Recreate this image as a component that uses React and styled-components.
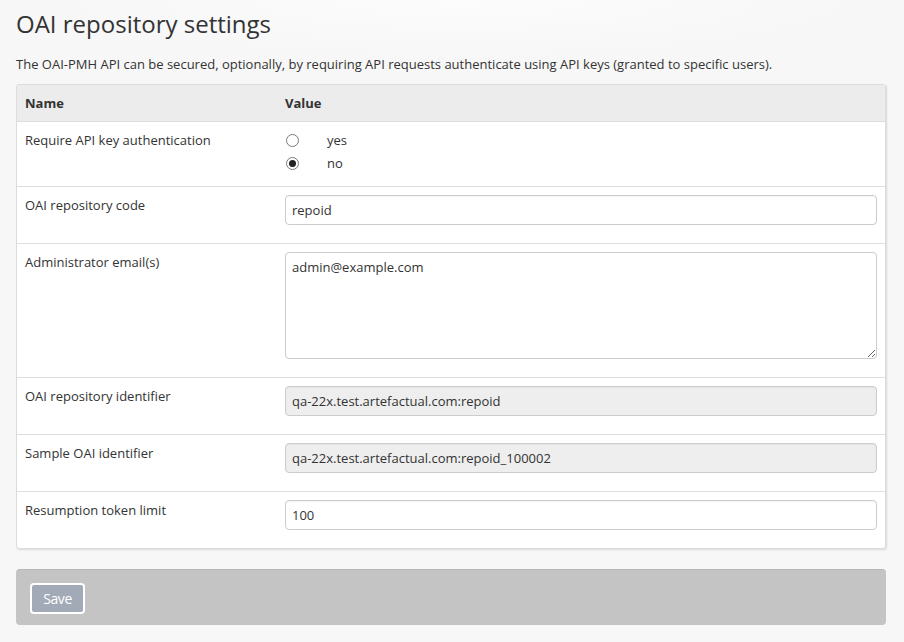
import React from "react";
import styled, { createGlobalStyle } from "styled-components";

const Global = createGlobalStyle`
  html, body { margin: 0; padding: 0; }
  body {
    background: #f7f7f7 radial-gradient(ellipse 420px 60px at 460px 0px, #fcfcfc, #f7f7f7);
    font-family: "Open Sans", "Liberation Sans", sans-serif;
    font-size: 13px;
    color: #333;
    min-height: 642px;
  }
`;

const Page = styled.div`
  width: 870px;
  padding: 9px 0 0 16px;
`;

const Title = styled.h1`
  margin: 0;
  font-size: 24px;
  font-weight: 400;
  line-height: 29px;
  color: #333;
`;

const Intro = styled.p`
  margin: 16px 0 10px;
  line-height: 20px;
`;

const Panel = styled.div`
  background: #fff;
  border: 1px solid #dcdcdc;
  border-radius: 3px;
  box-shadow: 1px 1px 2px rgba(0, 0, 0, 0.12);
  overflow: hidden;
`;

const Table = styled.table`
  width: 100%;
  border-collapse: collapse;
`;

const Th = styled.th`
  background: #ececec;
  text-align: left;
  font-weight: 700;
  line-height: 20px;
  padding: 8px;
  width: ${(p) => p.$w || "auto"};
  border-bottom: 1px solid #dedede;
`;

const Tr = styled.tr`
  & + & td { border-top: 1px solid #dedede; }
`;

const Td = styled.td`
  vertical-align: top;
  padding: 8px;
  line-height: 20px;
`;

const LabelCell = styled(Td)`
  padding-top: 8px;
`;

const RadioGroup = styled.div`
  display: flex;
  flex-direction: column;
  gap: 3px;
  margin-bottom: 5px;
`;

const RadioLine = styled.label`
  display: flex;
  align-items: center;
  height: 20px;
  gap: 28px;
  padding-left: 1px;
`;

const Radio = styled.input.attrs({ type: "radio" })`
  appearance: none;
  margin: 0;
  width: 13px;
  height: 13px;
  border: 1px solid #7a7a7a;
  border-radius: 50%;
  background: #fff;
  box-sizing: border-box;
  display: grid;
  place-items: center;
  &:checked::after {
    content: "";
    width: 7px;
    height: 7px;
    border-radius: 50%;
    background: #222;
  }
`;

const Field = styled.input`
  display: block;
  box-sizing: border-box;
  width: 100%;
  height: 30px;
  margin: 0 0 10px;
  padding: 4px 6px;
  font: inherit;
  font-size: 13px;
  color: #333;
  border: 1px solid #ccc;
  border-radius: 4px;
  background: ${(p) => (p.readOnly ? "#eeeeee" : "#fff")};
  box-shadow: inset 0 1px 1px rgba(0, 0, 0, 0.04);
  outline: none;
`;

const Area = styled.textarea`
  display: block;
  box-sizing: border-box;
  width: 100%;
  height: 107px;
  margin: 0 0 10px;
  padding: 4px 6px;
  font: inherit;
  font-size: 13px;
  line-height: 20px;
  color: #333;
  border: 1px solid #ccc;
  border-radius: 4px;
  background: #fff;
  outline: none;
  resize: vertical;
`;

const Actions = styled.div`
  margin-top: 20px;
  background: #c4c4c4;
  border-top: 1px solid #b8b8b8;
  border-radius: 4px;
  height: 56px;
  box-sizing: border-box;
  padding: 13px 14px;
  display: flex;
  align-items: flex-start;
`;

const SaveButton = styled.button`
  box-sizing: border-box;
  width: 55px;
  height: 31px;
  background: #a2aab8;
  border: 2px solid #fff;
  border-radius: 4px;
  color: #fff;
  font-family: "Open Sans", "Liberation Sans", sans-serif;
  font-size: 14px;
  letter-spacing: -0.4px;
  padding: 0;
  cursor: pointer;
`;

const rows = [
  { label: "OAI repository code", value: "repoid" },
  { label: "Administrator email(s)", value: "admin@example.com", area: true },
  { label: "OAI repository identifier", value: "qa-22x.test.artefactual.com:repoid", ro: true },
  { label: "Sample OAI identifier", value: "qa-22x.test.artefactual.com:repoid_100002", ro: true },
  { label: "Resumption token limit", value: "100" },
];

export default function App() {
  return (
    <>
      <Global />
      <Page>
        <Title>OAI repository settings</Title>
        <Intro>
          The OAI-PMH API can be secured, optionally, by requiring API requests authenticate using API keys (granted to specific users).
        </Intro>
        <Panel>
          <Table>
            <thead>
              <tr>
                <Th $w="244px">Name</Th>
                <Th>Value</Th>
              </tr>
            </thead>
            <tbody>
              <Tr>
                <LabelCell>Require API key authentication</LabelCell>
                <Td>
                  <RadioGroup>
                    <RadioLine>
                      <Radio name="auth" />
                      yes
                    </RadioLine>
                    <RadioLine>
                      <Radio name="auth" defaultChecked />
                      no
                    </RadioLine>
                  </RadioGroup>
                </Td>
              </Tr>
              {rows.map((r) => (
                <Tr key={r.label}>
                  <LabelCell>{r.label}</LabelCell>
                  <Td>
                    {r.area ? (
                      <Area defaultValue={r.value} />
                    ) : (
                      <Field defaultValue={r.value} readOnly={!!r.ro} />
                    )}
                  </Td>
                </Tr>
              ))}
            </tbody>
          </Table>
        </Panel>
        <Actions>
          <SaveButton>Save</SaveButton>
        </Actions>
      </Page>
    </>
  );
}
